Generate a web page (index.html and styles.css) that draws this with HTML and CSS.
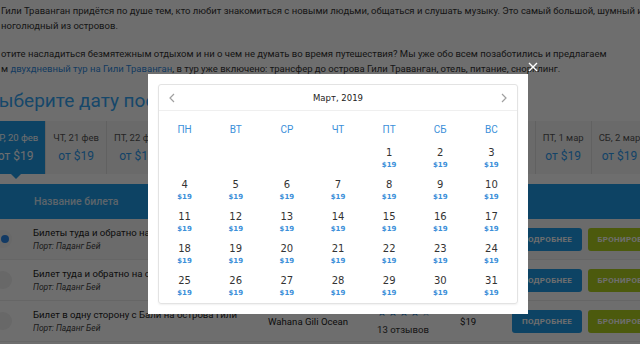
FILE: index.html
```html
<!DOCTYPE html>
<html lang="ru">
<head>
    <meta charset="UTF-8">
    <meta name="viewport" content="width=device-width, initial-scale=1.0">
    <title>Выберите дату поездки</title>
    <link rel="stylesheet" href="styles.css">
</head>
<body>

    <div class="page">
        <div class="intro">
            <p>Гили Траванган придётся по душе тем, кто любит знакомиться с новыми людьми, общаться и слушать музыку. Это самый большой, шумный и<br>ноголюдный из островов.</p>
            <p>отите насладиться безмятежным отдыхом и ни о чем не думать во время путешествия? Мы уже обо всем позаботились и предлагаем<br>м <a href="#">двухдневный тур на Гили Траванган</a>, в тур уже включено: трансфер до острова Гили Траванган, отель, питание, снорклинг.</p>
        </div>

        <h2 class="section-title">Выберите дату поездки</h2>

        <div class="dates">
            <div class="date active"><span class="date-day">СР, 20 фев</span><span class="date-price">от $19</span></div>
            <div class="date"><span class="date-day">ЧТ, 21 фев</span><span class="date-price">от $19</span></div>
            <div class="date"><span class="date-day">ПТ, 22 фев</span><span class="date-price">от $19</span></div>
            <div class="date"><span class="date-day">СБ, 23 фев</span><span class="date-price">от $19</span></div>
            <div class="date"><span class="date-day">ВС, 24 фев</span><span class="date-price">от $19</span></div>
            <div class="date"><span class="date-day">ПН, 25 фев</span><span class="date-price">от $19</span></div>
            <div class="date"><span class="date-day">ВТ, 26 фев</span><span class="date-price">от $19</span></div>
            <div class="date"><span class="date-day">СР, 27 фев</span><span class="date-price">от $19</span></div>
            <div class="date"><span class="date-day">ЧТ, 28 фев</span><span class="date-price">от $19</span></div>
            <div class="date"><span class="date-day">ПТ, 1 мар</span><span class="date-price">от $19</span></div>
            <div class="date"><span class="date-day">СБ, 2 мар</span><span class="date-price">от $19</span></div>
        </div>

        <div class="tickets">
            <div class="tickets-head">Название билета</div>

            <div class="ticket selected">
                <span class="ticket-radio"></span>
                <div class="ticket-info">
                    <div class="ticket-name">Билеты туда и обратно на Гили Траванган</div>
                    <div class="ticket-port">Порт: Паданг Бей</div>
                </div>
                <div class="ticket-hotel">Wahana Gili Ocean</div>
                <div class="ticket-rating">
                    <span class="stars">★★★★★</span>
                    <span class="reviews">13 отзывов</span>
                </div>
                <div class="ticket-price">$19</div>
                <button class="btn btn-more">Подробнее</button>
                <button class="btn btn-book">Бронировать</button>
            </div>

            <div class="ticket">
                <span class="ticket-radio"></span>
                <div class="ticket-info">
                    <div class="ticket-name">Билет туда и обратно на остров Гили</div>
                    <div class="ticket-port">Порт: Паданг Бей</div>
                </div>
                <div class="ticket-hotel">Wahana Gili Ocean</div>
                <div class="ticket-rating">
                    <span class="stars">★★★★★</span>
                    <span class="reviews">13 отзывов</span>
                </div>
                <div class="ticket-price">$19</div>
                <button class="btn btn-more">Подробнее</button>
                <button class="btn btn-book">Бронировать</button>
            </div>

            <div class="ticket">
                <span class="ticket-radio"></span>
                <div class="ticket-info">
                    <div class="ticket-name">Билет в одну сторону с Бали на острова Гили</div>
                    <div class="ticket-port">Порт: Паданг Бей</div>
                </div>
                <div class="ticket-hotel">Wahana Gili Ocean</div>
                <div class="ticket-rating">
                    <span class="stars">★★★★<span class="star-half">★</span></span>
                    <span class="reviews">13 отзывов</span>
                </div>
                <div class="ticket-price">$19</div>
                <button class="btn btn-more">Подробнее</button>
                <button class="btn btn-book">Бронировать</button>
            </div>
        </div>
    </div>

    <div class="overlay"></div>

    <div class="modal">
        <button class="modal-close" type="button">
            <svg width="10" height="10" viewBox="0 0 10 10"><path d="M1 1L9 9M9 1L1 9" stroke="#fff" stroke-width="1.4" fill="none"/></svg>
        </button>
        <div class="calendar">
            <div class="cal-head">
                <svg class="cal-arrow" width="6" height="10" viewBox="0 0 6 10"><path d="M5 1L1 5L5 9" stroke="#a0a0a0" stroke-width="1.2" fill="none"/></svg>
                <span class="cal-month">Март, 2019</span>
                <svg class="cal-arrow" width="6" height="10" viewBox="0 0 6 10"><path d="M1 1L5 5L1 9" stroke="#a0a0a0" stroke-width="1.2" fill="none"/></svg>
            </div>
            <div class="cal-weekdays">
                <span>ПН</span><span>ВТ</span><span>СР</span><span>ЧТ</span><span>ПТ</span><span>СБ</span><span>ВС</span>
            </div>
            <div class="cal-days" id="calDays"></div>
        </div>
    </div>

    <script>
        var days = document.getElementById('calDays');
        var html = '';
        for (var e = 0; e < 4; e++) {
            html += '<div class="cal-day"></div>';
        }
        for (var d = 1; d <= 31; d++) {
            html += '<div class="cal-day"><span class="cal-num">' + d + '</span><span class="cal-price">$19</span></div>';
        }
        days.innerHTML = html;
    </script>

</body>
</html>
```

FILE: styles.css
```css
body {
    margin: 0;
    width: 640px;
    height: 344px;
    overflow: hidden;
    background-color: #fff;
    font-family: Roboto, "Liberation Sans", sans-serif;
    color: #333;
}
.page {
    width: 640px;
    height: 344px;
    overflow: hidden;
}
.intro {
    padding-top: 3px;
    font-size: 9.5px;
    line-height: 15px;
    white-space: nowrap;
}
.intro p {
    margin: 0 0 13px 1px;
}
.intro a {
    color: #2f8ae0;
    text-decoration: none;
}
.section-title {
    margin: -1px 0 7px -13px;
    font-size: 19px;
    line-height: 26px;
    font-weight: 400;
    color: #35a6f5;
    white-space: nowrap;
}
.dates {
    display: flex;
    margin-left: -14px;
    height: 53px;
    background-color: #f5f5f5;
    white-space: nowrap;
}
.date {
    position: relative;
    display: flex;
    flex-direction: column;
    align-items: center;
    flex-shrink: 0;
    padding: 10px 7px 0;
    border-right: 1px solid #e2e2e2;
}
.date-day {
    font-size: 9.5px;
    line-height: 14px;
    color: #555;
}
.date-price {
    margin-top: 2px;
    font-size: 12px;
    line-height: 18px;
    color: #2e9bf0;
}
.date.active {
    background-color: #1e9be8;
}
.date.active .date-day,
.date.active .date-price {
    color: #fff;
}
.date.active::after {
    content: "";
    position: absolute;
    left: 50%;
    bottom: -5px;
    margin-left: -5px;
    border-left: 5px solid transparent;
    border-right: 5px solid transparent;
    border-top: 5px solid #1e9be8;
}
.tickets {
    margin-top: 10px;
}
.tickets-head {
    height: 35px;
    padding-left: 34px;
    background-color: #1e9be8;
    color: #d5e8f6;
    font-size: 10.5px;
    font-weight: 500;
    line-height: 35px;
}
.ticket {
    display: flex;
    align-items: center;
    height: 40px;
    border-bottom: 1px solid #ececec;
    font-size: 9.6px;
}
.ticket.selected {
    background-color: #f7f7f7;
}
.ticket-radio {
    position: relative;
    flex-shrink: 0;
    width: 18px;
    height: 18px;
    margin: 0 21px 0 -6px;
    border-radius: 50%;
    background-color: #f0f0f0;
}
.ticket.selected .ticket-radio::after {
    content: "";
    position: absolute;
    left: 7px;
    top: 5px;
    width: 8px;
    height: 8px;
    border-radius: 50%;
    background-color: #2a86e8;
}
.ticket-info {
    width: 235px;
    flex-shrink: 0;
    white-space: nowrap;
    overflow: hidden;
}
.ticket-name {
    line-height: 15px;
    color: #222;
}
.ticket-port {
    font-size: 8.5px;
    line-height: 13px;
    font-style: italic;
    color: #444;
}
.ticket-hotel {
    width: 109px;
    flex-shrink: 0;
    color: #222;
}
.ticket-rating {
    display: flex;
    flex-direction: column;
    width: 83px;
    flex-shrink: 0;
}
.stars {
    font-size: 11px;
    line-height: 12px;
    letter-spacing: 1px;
    color: #1c78c0;
}
.star-half {
    color: #8fb6d6;
}
.reviews {
    margin-top: 4px;
    line-height: 13px;
    color: #333;
}
.ticket-price {
    width: 52px;
    flex-shrink: 0;
    color: #222;
}
.btn {
    flex-shrink: 0;
    height: 23px;
    border: none;
    border-radius: 3px;
    color: #fff;
    font-family: Roboto, "Liberation Sans", sans-serif;
    font-size: 8px;
    font-weight: 700;
    text-transform: uppercase;
    letter-spacing: 0.3px;
    padding: 0;
}
.btn-more {
    width: 70px;
    background-color: #1e9be8;
}
.btn-book {
    width: 80px;
    margin-left: 6px;
    background-color: #b0d020;
}
.overlay {
    position: fixed;
    top: 0;
    left: 0;
    right: 0;
    bottom: 0;
    background-color: rgba(0, 0, 0, 0.57);
}
.modal {
    position: absolute;
    left: 148px;
    top: 74px;
    width: 380px;
    box-sizing: border-box;
    padding: 10px;
    background-color: #fff;
}
.modal-close {
    position: absolute;
    right: -10px;
    top: -12px;
    width: 10px;
    height: 10px;
    padding: 0;
    border: none;
    background: none;
    line-height: 0;
}
.calendar {
    border: 1px solid #e3e3e3;
    border-radius: 3px;
    box-shadow: 0 1px 2px rgba(0, 0, 0, 0.06);
}
.cal-head {
    display: flex;
    align-items: center;
    justify-content: space-between;
    height: 25px;
    padding: 0 10px;
    border-bottom: 1px solid #efefef;
}
.cal-month {
    font-family: "DejaVu Sans", Verdana, sans-serif;
    font-size: 8.5px;
    color: #222;
}
.cal-weekdays,
.cal-days {
    display: grid;
    grid-template-columns: repeat(7, 1fr);
    text-align: center;
}
.cal-weekdays {
    padding: 11px 0 4px;
    font-size: 10px;
    line-height: 16px;
    color: #3b8fd9;
}
.cal-days {
    grid-auto-rows: 32px;
    padding-bottom: 1px;
}
.cal-day {
    display: flex;
    flex-direction: column;
    align-items: center;
    padding-top: 3px;
}
.cal-num {
    font-family: "DejaVu Sans", Verdana, sans-serif;
    font-size: 10px;
    line-height: 15px;
    color: #333;
}
.cal-price {
    font-family: "DejaVu Sans", Verdana, sans-serif;
    font-size: 7px;
    font-weight: 700;
    line-height: 11px;
    color: #3b8fd9;
}
```
